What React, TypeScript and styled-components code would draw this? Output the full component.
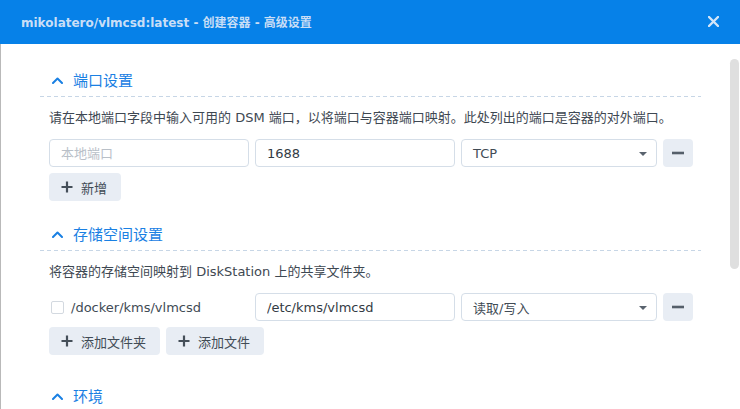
import React from "react";
import styled, { createGlobalStyle } from "styled-components";

const GlobalStyle = createGlobalStyle`
  html, body {
    margin: 0;
    padding: 0;
    background: #ffffff;
    overflow: hidden;
  }
  * {
    box-sizing: border-box;
  }
`;

const FONT = `"DejaVu Sans", "Noto Sans CJK SC", sans-serif`;

const ChevronUp = () => (
  <svg width="11" height="7" viewBox="0 0 11 7">
    <polyline
      points="1,6 5.5,1.5 10,6"
      fill="none"
      stroke="#1a80e3"
      strokeWidth="2"
      strokeLinecap="round"
      strokeLinejoin="round"
    />
  </svg>
);

const PlusIcon = () => (
  <svg width="12" height="12" viewBox="0 0 12 12">
    <path d="M6 0.5v11M0.5 6h11" stroke="#454f59" strokeWidth="2.2" />
  </svg>
);

const MinusIcon = () => (
  <svg width="12" height="12" viewBox="0 0 12 12">
    <path d="M0 6h12" stroke="#555f6a" strokeWidth="2.6" />
  </svg>
);

const CloseIcon = () => (
  <svg width="11" height="11" viewBox="0 0 11 11">
    <path
      d="M1 1L10 10M10 1L1 10"
      stroke="#d3e5f8"
      strokeWidth="2.4"
      strokeLinecap="round"
    />
  </svg>
);

interface SelectProps {
  value: string;
}

const SelectBox: React.FC<SelectProps> = ({ value }) => (
  <Select>
    <span>{value}</span>
    <Caret />
  </Select>
);

const App: React.FC = () => {
  return (
    <Window>
      <GlobalStyle />
      <Header>
        <Title>mikolatero/vlmcsd:latest - 创建容器 - 高级设置</Title>
        <CloseButton>
          <CloseIcon />
        </CloseButton>
      </Header>
      <Body>
        <Content>
          <Section>
            <SectionHeader>
              <ChevronUp />
              <SectionTitle>端口设置</SectionTitle>
            </SectionHeader>
            <SectionBody>
              <Description>
                请在本地端口字段中输入可用的 DSM 端口，以将端口与容器端口映射。此处列出的端口是容器的对外端口。
              </Description>
              <FieldRow>
                <TextInput placeholder="本地端口" readOnly />
                <TextInput defaultValue="1688" readOnly />
                <SelectBox value="TCP" />
                <IconButton>
                  <MinusIcon />
                </IconButton>
              </FieldRow>
              <ButtonRow>
                <AddButton>
                  <PlusIcon />
                  新增
                </AddButton>
              </ButtonRow>
            </SectionBody>
          </Section>

          <Section $gapAfter={27}>
            <SectionHeader>
              <ChevronUp />
              <SectionTitle>存储空间设置</SectionTitle>
            </SectionHeader>
            <SectionBody>
              <Description>
                将容器的存储空间映射到 DiskStation 上的共享文件夹。
              </Description>
              <FieldRow>
                <PathCell>
                  <Checkbox />
                  /docker/kms/vlmcsd
                </PathCell>
                <TextInput defaultValue="/etc/kms/vlmcsd" readOnly />
                <SelectBox value="读取/写入" />
                <IconButton>
                  <MinusIcon />
                </IconButton>
              </FieldRow>
              <ButtonRow>
                <AddButton>
                  <PlusIcon />
                  添加文件夹
                </AddButton>
                <AddButton>
                  <PlusIcon />
                  添加文件
                </AddButton>
              </ButtonRow>
            </SectionBody>
          </Section>

          <Section>
            <SectionHeader>
              <ChevronUp />
              <SectionTitle>环境</SectionTitle>
            </SectionHeader>
          </Section>
        </Content>
        <ScrollTrack>
          <ScrollThumb />
        </ScrollTrack>
      </Body>
    </Window>
  );
};

export default App;

const Window = styled.div`
  width: 740px;
  height: 409px;
  display: flex;
  flex-direction: column;
  font-family: ${FONT};
  background: #ffffff;
  overflow: hidden;
`;

const Header = styled.div`
  height: 44px;
  flex-shrink: 0;
  background-color: #0681e8;
  display: flex;
  align-items: center;
  justify-content: space-between;
  padding: 0 21px 0 21px;
`;

const Title = styled.div`
  color: #c9def6;
  font-size: 12px;
  font-weight: bold;
  padding-bottom: 1px;
`;

const CloseButton = styled.div`
  width: 11px;
  height: 11px;
  display: flex;
  margin-top: -1px;
`;

const Body = styled.div`
  flex: 1;
  display: flex;
  flex-direction: row;
  border-left: 1px solid #b9b9b9;
  min-height: 0;
`;

const Content = styled.div`
  width: 661px;
  padding: 22px 0 0 39px;
  box-sizing: content-box;
  display: flex;
  flex-direction: column;
`;

const ScrollTrack = styled.div`
  margin-left: auto;
  width: 9px;
  margin-right: 1px;
  padding-top: 15px;
`;

const ScrollThumb = styled.div`
  width: 9px;
  height: 210px;
  border-radius: 5px;
  background-color: #dfdfdf;
`;

const Section = styled.div<{ $gapAfter?: number }>`
  display: flex;
  flex-direction: column;
  margin-bottom: ${({ $gapAfter }) => $gapAfter ?? 19}px;
`;

const SectionHeader = styled.div`
  height: 31px;
  display: flex;
  align-items: center;
  gap: 10px;
  padding-left: 12px;
  padding-bottom: 1px;
  background-image: repeating-linear-gradient(
    to right,
    #c7d6e6 0px,
    #c7d6e6 4px,
    transparent 4px,
    transparent 7px
  );
  background-size: 100% 1px;
  background-repeat: no-repeat;
  background-position: left bottom;

  svg {
    margin-top: -1px;
  }
`;

const SectionTitle = styled.div`
  color: #1a80e3;
  font-size: 15px;
  line-height: 20px;
`;

const SectionBody = styled.div`
  padding: 11px 0 0 9px;
  display: flex;
  flex-direction: column;
`;

const Description = styled.div`
  font-size: 13px;
  line-height: 20px;
  color: #3e4852;
  white-space: nowrap;
  margin-bottom: 11px;
`;

const FieldRow = styled.div`
  display: grid;
  grid-template-columns: 200px 200px 196px 30px;
  gap: 6px;
  height: 28px;
  margin-bottom: 6px;
`;

const TextInput = styled.input`
  height: 28px;
  width: 100%;
  border: 1px solid #d5dee8;
  border-radius: 4px;
  padding: 0 11px;
  font-family: ${FONT};
  font-size: 13px;
  color: #333b44;
  background: #ffffff;
  outline: none;

  &::placeholder {
    color: #b9c0c8;
  }
`;

const Select = styled.div`
  height: 28px;
  border: 1px solid #d5dee8;
  border-radius: 4px;
  padding: 0 9px 0 11px;
  display: flex;
  align-items: center;
  justify-content: space-between;
  font-size: 13px;
  color: #414b55;
`;

const Caret = styled.div`
  width: 0;
  height: 0;
  border-left: 4px solid transparent;
  border-right: 4px solid transparent;
  border-top: 4px solid #59636e;
  margin-top: 1px;
`;

const IconButton = styled.div`
  height: 28px;
  width: 30px;
  border-radius: 4px;
  background-color: #e8edf4;
  display: flex;
  align-items: center;
  justify-content: center;
`;

const PathCell = styled.div`
  display: flex;
  align-items: center;
  gap: 7px;
  padding-left: 2px;
  font-size: 13px;
  color: #414b55;
`;

const Checkbox = styled.div`
  width: 13px;
  height: 13px;
  border: 1px solid #d3d9e0;
  border-radius: 2px;
  background: #ffffff;
`;

const ButtonRow = styled.div`
  display: flex;
  gap: 6px;
`;

const AddButton = styled.div`
  height: 28px;
  display: flex;
  align-items: center;
  gap: 8px;
  padding: 0 14px 0 12px;
  border-radius: 4px;
  background-color: #e8edf4;
  font-size: 13px;
  color: #414b55;
`;
